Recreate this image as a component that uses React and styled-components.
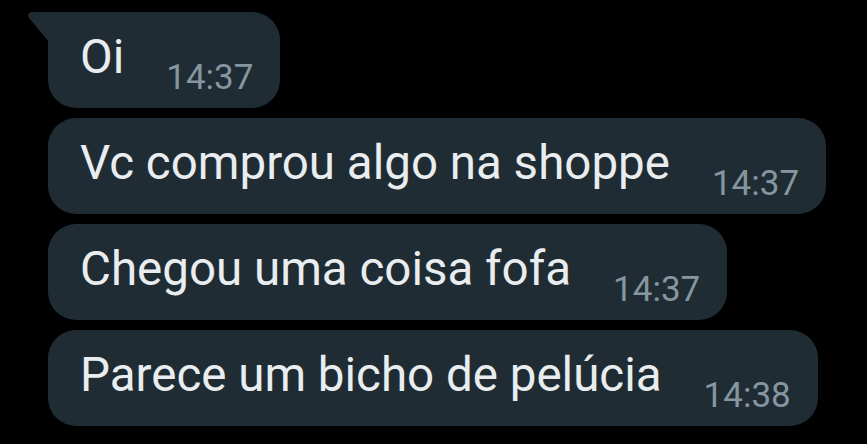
import React from 'react';
import styled, { createGlobalStyle } from 'styled-components';

const GlobalStyle = createGlobalStyle`
  html, body {
    margin: 0;
    padding: 0;
    background: #000;
  }
  body {
    font-family: Roboto, "Noto Sans", sans-serif;
  }
`;

const Chat = styled.div`
  width: 867px;
  height: 444px;
  box-sizing: border-box;
  padding: 12px 0 0 48px;
  display: flex;
  flex-direction: column;
  align-items: flex-start;
  gap: 10px;
  overflow: hidden;
`;

const Bubble = styled.div`
  position: relative;
  height: 96px;
  box-sizing: border-box;
  padding: 0 27px 0 32px;
  display: flex;
  align-items: flex-start;
  background: #202c33;
  border-radius: ${props => (props.tail ? '0 28px 28px 28px' : '28px')};
`;

const Tail = styled.svg`
  position: absolute;
  left: -22px;
  top: 0;
`;

const Text = styled.span`
  color: #e9edef;
  font-size: 47.5px;
  line-height: 1;
  margin-top: 22px;
  white-space: nowrap;
`;

const Time = styled.span`
  color: #8696a0;
  font-size: 35px;
  line-height: 1;
  margin: 48px 0 0 42px;
  white-space: nowrap;
`;

const messages = [
  { text: 'Oi', time: '14:37', tail: true },
  { text: 'Vc comprou algo na shoppe', time: '14:37' },
  { text: 'Chegou uma coisa fofa', time: '14:37' },
  { text: 'Parece um bicho de pelúcia', time: '14:38' }
];

const App = () => (
  <>
    <GlobalStyle />
    <Chat>
      {messages.map((m, i) => (
        <Bubble key={i} tail={m.tail}>
          {m.tail && (
            <Tail width="23" height="30" viewBox="0 0 23 30">
              <path d="M23 0 L23 30 L3 6 Q0 0 7 0 Z" fill="#202c33" />
            </Tail>
          )}
          <Text>{m.text}</Text>
          <Time>{m.time}</Time>
        </Bubble>
      ))}
    </Chat>
  </>
);

export default App;
